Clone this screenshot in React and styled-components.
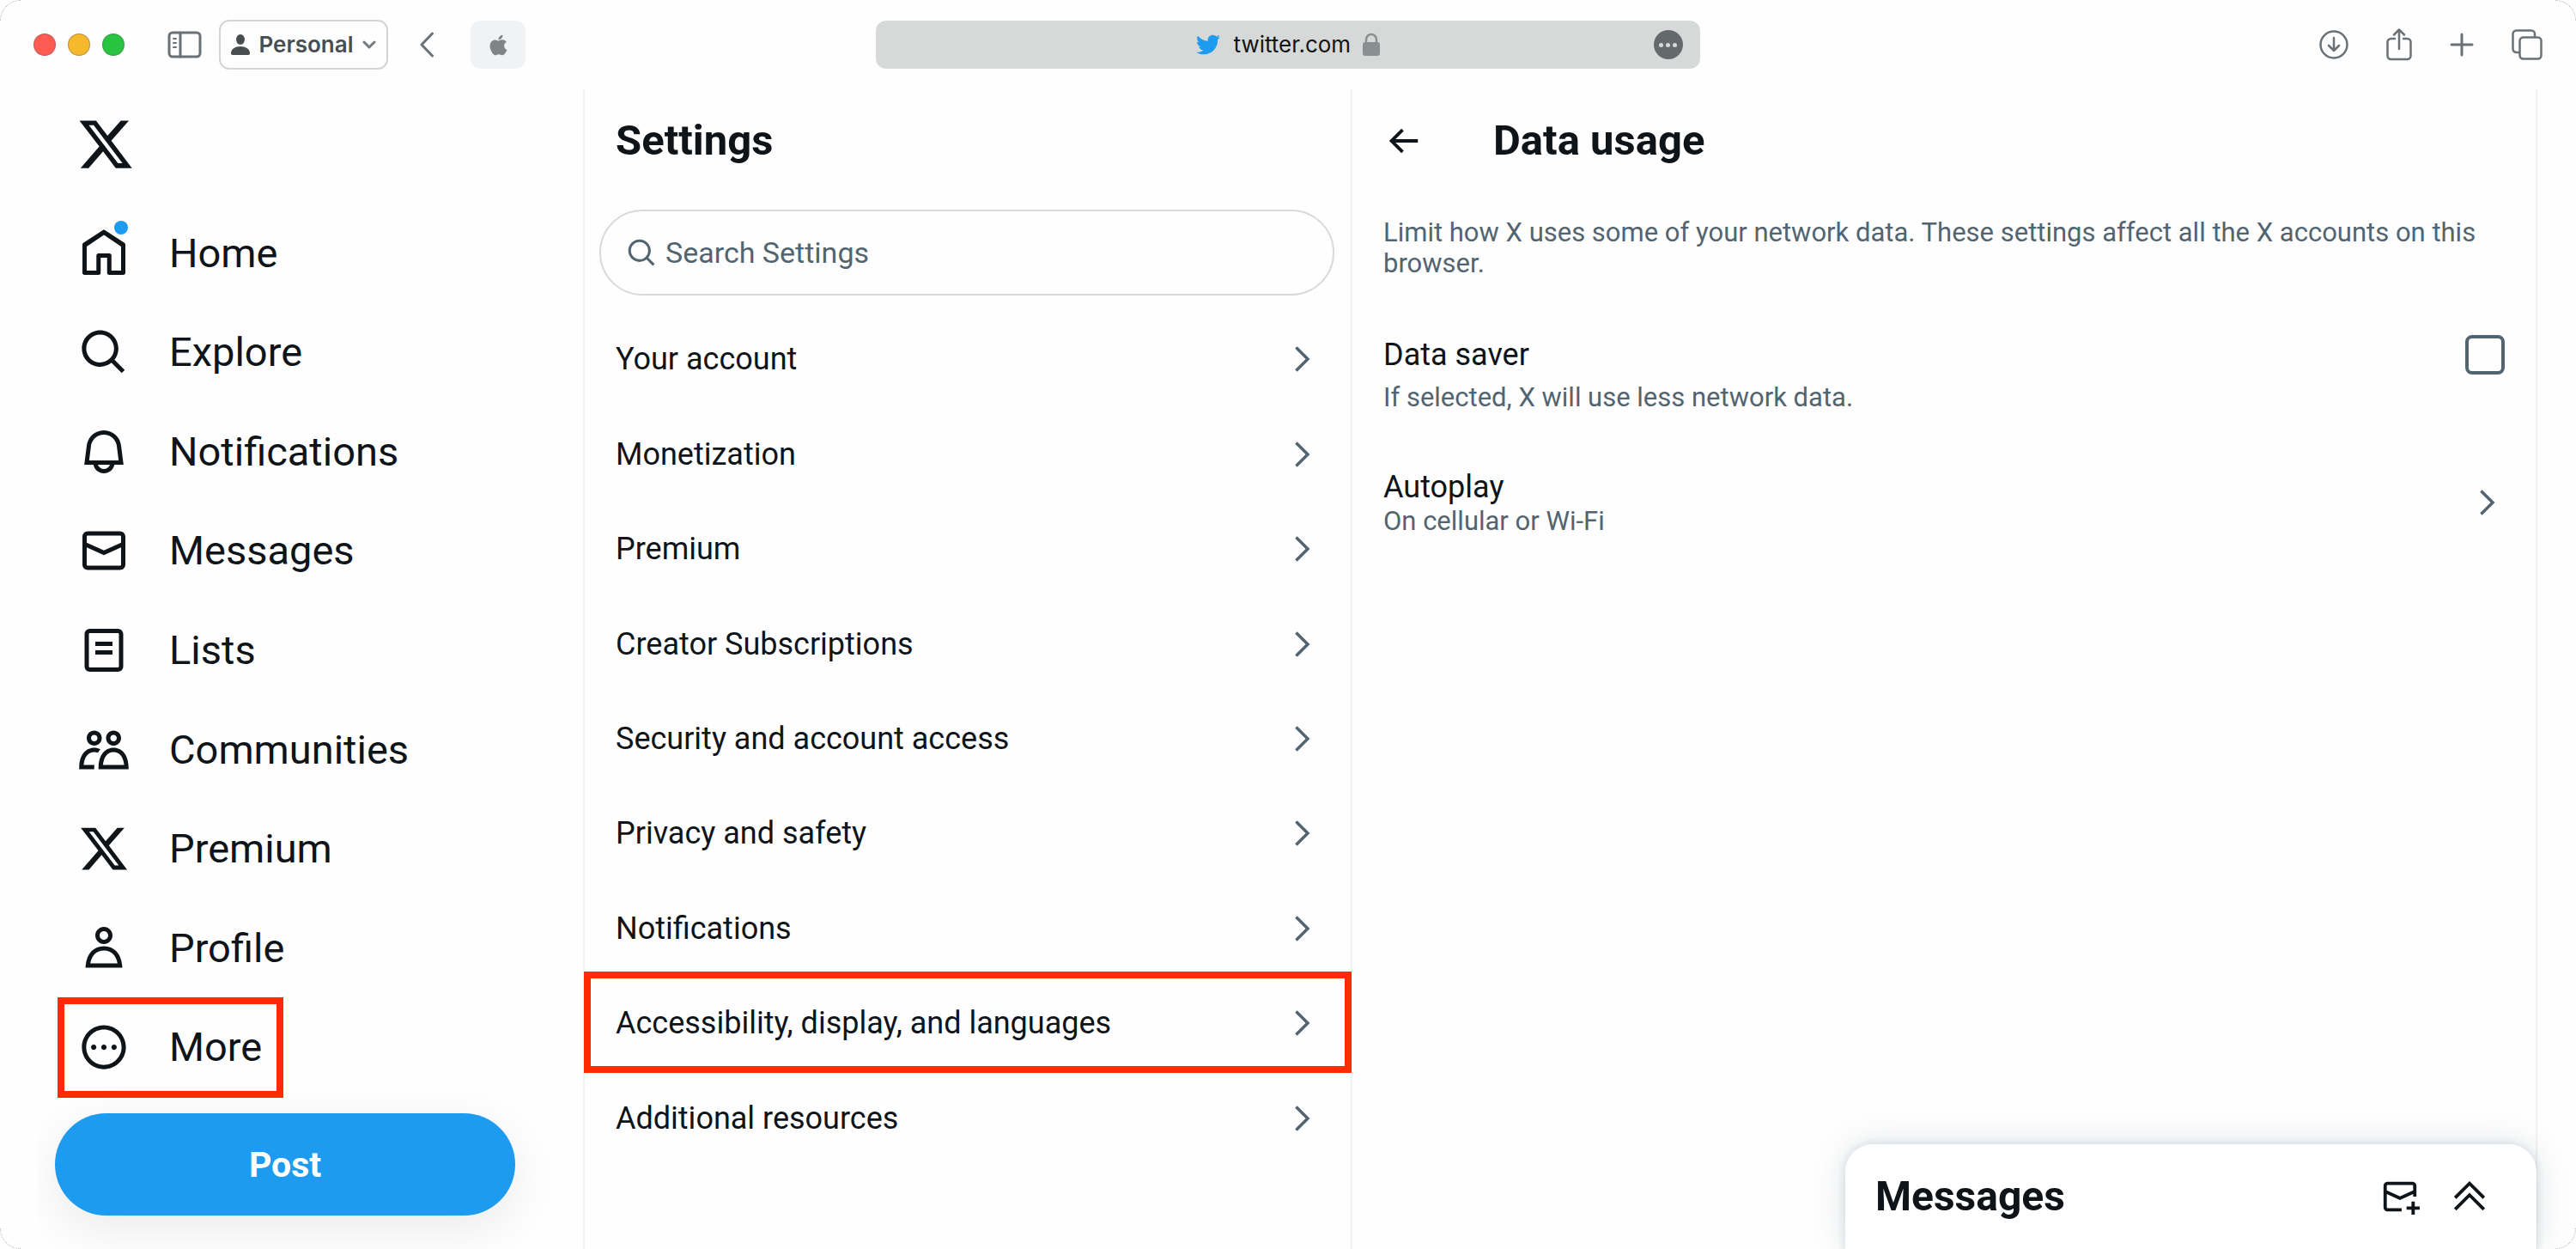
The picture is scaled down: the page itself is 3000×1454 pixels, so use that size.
import React from "react";
import styled, { createGlobalStyle, css } from "styled-components";
import { FaApple, FaTwitter } from "react-icons/fa";

const ink = "#0f1419";
const muted = "#536471";
const line = "#f0f1f2";
const chrome = "#6b7175";
const accent = "#1d9bf0";
const paper = "#fefefe";
const mark = "#ff2b00";

const GlobalStyle = createGlobalStyle`
  *, *::before, *::after { box-sizing: border-box; }
  body {
    margin: 0;
    background: ${paper};
    color: ${ink};
    font-family: Roboto, "Liberation Sans", sans-serif;
  }
  button, input { font: inherit; color: inherit; }
  h1, h2, p, ul { margin: 0; padding: 0; }
  ul { list-style: none; }
  svg { display: block; flex: none; }
`;

/* ---------- icons ---------- */

const paths = {
  x: "M18.244 2.25h3.308l-7.227 8.26 8.502 11.24H16.17l-5.214-6.817L4.99 21.75H1.68l7.73-8.835L1.254 2.25H8.08l4.713 6.231zm-1.161 17.52h1.833L7.084 4.126H5.117z",
  home: "M21.591 7.146L12.52 1.157c-.316-.21-.724-.21-1.04 0l-9.071 5.99c-.26.173-.409.456-.409.757v13.183c0 .502.418.913.929.913h6.638c.511 0 .929-.41.929-.913v-7.075h3.008v7.075c0 .502.418.913.929.913h6.639c.51 0 .928-.41.928-.913V7.904c0-.301-.158-.584-.408-.758zM20 20l-4.5.01.011-7.097c0-.502-.418-.913-.928-.913H9.44c-.511 0-.929.41-.929.913L8.5 20H4V8.773l8.011-5.342L20 8.764z",
  search:
    "M10.25 3.75c-3.59 0-6.5 2.91-6.5 6.5s2.91 6.5 6.5 6.5c1.795 0 3.419-.726 4.596-1.904 1.178-1.177 1.904-2.801 1.904-4.596 0-3.59-2.91-6.5-6.5-6.5zm-8.5 6.5c0-4.694 3.806-8.5 8.5-8.5s8.5 3.806 8.5 8.5c0 1.986-.682 3.815-1.824 5.262l4.781 4.781-1.414 1.414-4.781-4.781c-1.447 1.142-3.276 1.824-5.262 1.824-4.694 0-8.5-3.806-8.5-8.5z",
  bell: "M19.993 9.042C19.48 5.017 16.054 2 11.996 2s-7.49 3.021-7.999 7.051L2.866 18H7.1c.463 2.282 2.481 4 4.9 4s4.437-1.718 4.9-4h4.236l-1.143-8.958zM12 20c-1.306 0-2.417-.835-2.829-2h5.658c-.412 1.165-1.523 2-2.829 2zm-6.866-4l.847-6.698C6.364 6.272 8.941 4 11.996 4s5.627 2.268 6.013 5.295L18.864 16H5.134z",
  mail: "M1.998 5.5c0-1.381 1.119-2.5 2.5-2.5h15c1.381 0 2.5 1.119 2.5 2.5v13c0 1.381-1.119 2.5-2.5 2.5h-15c-1.381 0-2.5-1.119-2.5-2.5v-13zm2.5-.5c-.276 0-.5.224-.5.5v2.764l8 3.638 8-3.636V5.5c0-.276-.224-.5-.5-.5h-15zm15.5 5.463l-8 3.636-8-3.638V18.5c0 .276.224.5.5.5h15c.276 0 .5-.224.5-.5v-8.037z",
  list: "M3 4.5C3 3.12 4.12 2 5.5 2h13C19.88 2 21 3.12 21 4.5v15c0 1.38-1.12 2.5-2.5 2.5h-13C4.12 22 3 20.88 3 19.5v-15zM5.5 4c-.28 0-.5.22-.5.5v15c0 .28.22.5.5.5h13c.28 0 .5-.22.5-.5v-15c0-.28-.22-.5-.5-.5h-13zM16 10H8V8h8v2zm-8 2h8v2H8v-2z",
  people:
    "M7.501 19.917L7.471 21H.472l.029-1.027c.184-6.618 3.736-8.977 7-8.977.963 0 1.95.212 2.87.672-.444.478-.851 1.03-1.212 1.656-.507-.204-1.054-.329-1.658-.329-2.767 0-4.57 2.223-4.938 6.004H7.56c-.023.302-.05.599-.059.918zm15.998.056L23.528 21H9.472l.029-1.027c.184-6.618 3.736-8.977 7-8.977s6.816 2.358 7 8.977zM21.437 19c-.367-3.781-2.17-6.004-4.938-6.004s-4.57 2.223-4.938 6.004h9.875zm-4.938-9c-.799 0-1.527-.279-2.116-.73-.836-.64-1.384-1.638-1.384-2.77 0-1.93 1.567-3.5 3.5-3.5s3.5 1.57 3.5 3.5c0 1.132-.548 2.13-1.384 2.77-.589.451-1.317.73-2.116.73zm-1.5-3.5c0 .827.673 1.5 1.5 1.5s1.5-.673 1.5-1.5-.673-1.5-1.5-1.5-1.5.673-1.5 1.5zM7.5 3C9.433 3 11 4.57 11 6.5S9.433 10 7.5 10 4 8.43 4 6.5 5.567 3 7.5 3zm0 2C6.673 5 6 5.673 6 6.5S6.673 8 7.5 8 9 7.327 9 6.5 8.327 5 7.5 5z",
  person:
    "M5.651 19h12.698c-.337-1.8-1.023-3.21-1.945-4.19C15.318 13.65 13.838 13 12 13s-3.317.65-4.404 1.81c-.922.98-1.608 2.39-1.945 4.19zm.486-5.56C7.627 11.85 9.648 11 12 11s4.373.85 5.863 2.44c1.477 1.58 2.366 3.8 2.632 6.46l.11 1.1H3.395l.11-1.1c.266-2.66 1.155-4.88 2.632-6.46zM12 4c-1.105 0-2 .9-2 2s.895 2 2 2 2-.9 2-2-.895-2-2-2zM8 6c0-2.21 1.791-4 4-4s4 1.79 4 4-1.791 4-4 4-4-1.79-4-4z",
  more: "M3.75 12c0-4.56 3.69-8.25 8.25-8.25s8.25 3.69 8.25 8.25-3.69 8.25-8.25 8.25S3.75 16.56 3.75 12zM12 1.75C6.34 1.75 1.75 6.34 1.75 12S6.34 22.25 12 22.25 22.25 17.66 22.25 12 17.66 1.75 12 1.75zm-4.75 11.5c.69 0 1.25-.56 1.25-1.25s-.56-1.25-1.25-1.25S6 11.31 6 12s.56 1.25 1.25 1.25zm9.5 0c.69 0 1.25-.56 1.25-1.25s-.56-1.25-1.25-1.25-1.25.56-1.25 1.25.56 1.25 1.25 1.25zM13.25 12c0 .69-.56 1.25-1.25 1.25s-1.25-.56-1.25-1.25.56-1.25 1.25-1.25 1.25.56 1.25 1.25z",
  chevron:
    "M14.586 12L7.543 4.96l1.414-1.42L17.414 12l-8.457 8.46-1.414-1.42L14.586 12z",
  back: "M7.414 13l5.043 5.04-1.414 1.42L3.586 12l7.457-7.46 1.414 1.42L7.414 11H21v2H7.414z",
  compose:
    "M1.998 5.5c0-1.381 1.119-2.5 2.5-2.5h15c1.381 0 2.5 1.119 2.5 2.5V12h-2v-1.537l-8 3.636-8-3.638V18.5c0 .276.224.5.5.5H13v2H4.498c-1.381 0-2.5-1.119-2.5-2.5v-13zm2.5-.5c-.276 0-.5.224-.5.5v2.764l8 3.638 8-3.636V5.5c0-.276-.224-.5-.5-.5h-15zM19 18v-3h2v3h3v2h-3v3h-2v-3h-3v-2h3z",
  expand:
    "M12 2.59l9.46 9.45-1.42 1.42L12 5.41l-8.04 8.05-1.42-1.42L12 2.59zm0 7l9.46 9.45-1.42 1.42L12 12.41l-8.04 8.05-1.42-1.42L12 9.59z",
};

const Glyph = ({ name, size }) => (
  <svg viewBox="0 0 24 24" width={size} height={size} fill="currentColor" aria-hidden="true">
    <path d={paths[name]} />
  </svg>
);

const LineArt = ({ w, h, weight = 3, children }) => (
  <svg
    viewBox={`0 0 ${w} ${h}`}
    width={w}
    height={h}
    fill="none"
    stroke="currentColor"
    strokeWidth={weight}
    strokeLinecap="round"
    strokeLinejoin="round"
    aria-hidden="true"
  >
    {children}
  </svg>
);

/* ---------- window chrome ---------- */

const Shell = styled.div`
  display: flex;
  flex-direction: column;
  min-height: 100vh;
`;

const Corner = styled.span`
  position: fixed;
  z-index: 3;
  width: 24px;
  height: 24px;
  pointer-events: none;
  ${({ $v, $h }) => css`
    ${$v}: 0;
    ${$h}: 0;
    border-${$v}: 1px dotted #b4b4b4;
    border-${$h}: 1px dotted #b4b4b4;
    border-${$v}-${$h}-radius: 24px;
  `}
`;

const Toolbar = styled.header`
  display: grid;
  grid-template-columns: 1fr minmax(0, 960px) 1fr;
  align-items: center;
  height: 104px;
  padding: 0 39px 0 38px;
  color: ${chrome};
  font-family: Inter, "Liberation Sans", sans-serif;
`;

const ToolGroup = styled.div`
  display: flex;
  align-items: center;
  gap: ${({ $gap }) => $gap}px;
  justify-content: ${({ $end }) => ($end ? "flex-end" : "flex-start")};
`;

const PlainButton = styled.button`
  display: flex;
  align-items: center;
  justify-content: center;
  padding: 0;
  border: 0;
  background: none;
  cursor: pointer;
`;

const Light = styled(PlainButton)`
  width: 26px;
  height: 26px;
  border: 1px solid rgba(90, 90, 90, 0.4);
  border-radius: 50%;
  background: ${({ $color }) => $color};
`;

const Lights = styled.div`
  display: flex;
  gap: 14px;
  padding-left: 1px;
  margin-right: 50px;
`;

const ProfileButton = styled(PlainButton)`
  width: 197px;
  height: 58px;
  margin: 0 36px 0 20px;
  border: 2px solid #d3d4d5;
  border-radius: 12px;
  color: #484d50;
  font-size: 26px;
  font-weight: 600;
  line-height: 32px;
  gap: 10px;
`;

const PinnedTab = styled(PlainButton)`
  width: 64px;
  height: 56px;
  margin-left: 42px;
  border-radius: 12px;
  background: #f1f2f4;
  color: #7f8487;
`;

const AddressBar = styled.div`
  display: grid;
  grid-template-columns: 1fr auto 1fr;
  align-items: center;
  height: 56px;
  padding: 0 20px;
  border-radius: 12px;
  background: #d7d9d8;
`;

const Address = styled.label`
  grid-column: 2;
  display: flex;
  align-items: center;
  color: #8a8f91;
`;

const Bird = styled(FaTwitter)`
  margin-right: 16px;
  color: ${accent};
`;

const AddressInput = styled.input`
  width: 150px;
  padding: 0;
  border: 0;
  outline: 0;
  background: none;
  color: #111416;
  font-size: 26px;
  line-height: 32px;
`;

const PageMenu = styled(PlainButton)`
  justify-self: end;
  gap: 3px;
  width: 34px;
  height: 34px;
  border-radius: 50%;
  background: #64696b;
  &::before, &::after, & > span {
    content: "";
    width: 5px;
    height: 5px;
    border-radius: 50%;
    background: #d7d9d8;
  }
`;

/* ---------- page columns ---------- */

const Columns = styled.div`
  flex: 1;
  display: grid;
  grid-template-columns: 679px minmax(0, 894fr) minmax(0, 1382fr);
  padding-right: 45px;
`;

const Sidebar = styled.div`
  margin-left: 44px;
  padding: 0 79px 0 20px;
  overflow-x: clip;
`;

const Logo = styled.a`
  display: block;
  width: fit-content;
  padding: 30px 0 35px;
  margin-left: 25px;
  color: inherit;
`;

const NavList = styled.ul`
  display: grid;
  grid-template-rows: repeat(9, 1fr);
  height: 1040px;
`;

const Highlight = css`
  &::after {
    content: "";
    position: absolute;
    inset: ${({ $inset }) => $inset};
    border: 8px solid ${mark};
    pointer-events: none;
  }
`;

const NavLink = styled.a`
  position: relative;
  display: flex;
  align-items: center;
  gap: 46px;
  width: fit-content;
  height: 100%;
  padding: 0 25px 0 27px;
  color: inherit;
  font-size: 47px;
  line-height: 60px;
  text-decoration: none;
  ${({ $inset }) => $inset && Highlight}
`;

const NavIcon = styled.span`
  position: relative;
`;

const UnreadDot = styled.span`
  position: absolute;
  top: -8px;
  right: 2px;
  width: 16px;
  height: 16px;
  border-radius: 50%;
  background: ${accent};
`;

const PostButton = styled(PlainButton)`
  width: 100%;
  height: 119px;
  margin-top: 19px;
  border-radius: 60px;
  background: ${accent};
  box-shadow: 0 16px 56px rgba(0, 0, 0, 0.08);
  color: #fff;
  font-size: 41px;
  font-weight: 700;
  line-height: 48px;
`;

const SettingsColumn = styled.section`
  border-left: 2px solid ${line};
`;

const DetailColumn = styled.main`
  border: solid ${line};
  border-width: 0 2px;
`;

const ColumnHeader = styled.header`
  display: flex;
  align-items: center;
  gap: 82px;
  height: 120px;
  padding: 0 36px;
`;

const Title = styled.h2`
  font-size: 49px;
  font-weight: 700;
  line-height: 60px;
`;

const SearchBox = styled.label`
  display: flex;
  align-items: center;
  gap: 9px;
  height: 100px;
  margin: 20px 19px 19px 17px;
  padding: 0 29px;
  border: 2px solid #d8d9da;
  border-radius: 50px;
  color: ${muted};
`;

const SearchInput = styled.input`
  flex: 1;
  min-width: 0;
  padding: 0;
  border: 0;
  outline: 0;
  background: none;
  font-size: 34px;
  line-height: 42px;
  &::placeholder { color: ${muted}; opacity: 1; }
`;

const SettingsList = styled.ul`
  display: grid;
  grid-template-rows: repeat(9, 1fr);
  height: 994px;
`;

const SettingsLink = styled.a`
  position: relative;
  display: flex;
  align-items: center;
  justify-content: space-between;
  height: 100%;
  padding: 0 36px;
  color: inherit;
  font-size: 36px;
  line-height: 42px;
  text-decoration: none;
  ${({ $inset }) => $inset && Highlight}
`;

const ChevronWrap = styled.span`
  color: ${muted};
`;

const Note = styled.p`
  color: ${muted};
  font-size: 31px;
  line-height: 36px;
`;

const Intro = styled(Note)`
  padding: 29px 36px 0;
`;

const Option = styled.div`
  padding: 65px 36px 0;
`;

const OptionLabel = styled.label`
  display: flex;
  align-items: center;
  justify-content: space-between;
  margin-bottom: 9px;
  font-size: 36px;
  line-height: 46px;
`;

const CheckBox = styled.input`
  appearance: none;
  width: 46px;
  height: 46px;
  margin: 0;
  border: 4px solid ${muted};
  border-radius: 8px;
  &:checked { background: ${accent}; border-color: ${accent}; }
`;

const OptionLink = styled.a`
  display: flex;
  align-items: center;
  justify-content: space-between;
  padding: 64px 36px 0;
  color: inherit;
  font-size: 36px;
  line-height: 44px;
  text-decoration: none;
`;

const Dock = styled.aside`
  position: fixed;
  right: 46px;
  bottom: 0;
  display: flex;
  align-items: center;
  gap: 35px;
  width: 805px;
  height: 122px;
  padding: 0 55px 0 35px;
  border-radius: 32px 32px 0 0;
  background: #fff;
  box-shadow: 0 0 38px rgba(101, 119, 134, 0.2), 0 0 8px 2px rgba(101, 119, 134, 0.15);
`;

const DockTitle = styled(Title)`
  flex: 1;
  font-size: 48px;
`;

/* ---------- content ---------- */

const nav = [
  { icon: "home", label: "Home", unread: true },
  { icon: "search", label: "Explore" },
  { icon: "bell", label: "Notifications" },
  { icon: "mail", label: "Messages" },
  { icon: "list", label: "Lists" },
  { icon: "people", label: "Communities" },
  { icon: "x", label: "Premium" },
  { icon: "person", label: "Profile" },
  { icon: "more", label: "More", inset: "0 0 -1px 3px" },
];

const settings = [
  { label: "Your account" },
  { label: "Monetization" },
  { label: "Premium" },
  { label: "Creator Subscriptions" },
  { label: "Security and account access" },
  { label: "Privacy and safety" },
  { label: "Notifications" },
  { label: "Accessibility, display, and languages", inset: "-5px -1px -2px" },
  { label: "Additional resources" },
];

const Chevron = () => (
  <ChevronWrap>
    <Glyph name="chevron" size={42} />
  </ChevronWrap>
);

function BrowserBar() {
  return (
    <Toolbar>
      <ToolGroup $gap={0}>
        <Lights>
          <Light $color="#fe5b52" aria-label="Close window" />
          <Light $color="#f8b82c" aria-label="Minimize window" />
          <Light $color="#28c43f" aria-label="Zoom window" />
        </Lights>
        <PlainButton aria-label="Show sidebar">
          <LineArt w={40} h={32}>
            <rect x="2" y="2" width="36" height="28" rx="4" />
            <path d="M15 2v28" />
            <path d="M7 9h3M7 14h3M7 19h3" strokeWidth="2" />
          </LineArt>
        </PlainButton>
        <ProfileButton aria-haspopup="menu">
          <svg width="22" height="24" viewBox="0 0 22 24" fill="currentColor" aria-hidden="true">
            <ellipse cx="11" cy="6" rx="5" ry="6" />
            <path d="M0 22c0-5 5-8 11-8s11 3 11 8c0 1-.5 2-2 2H2c-1.500 0-2-1-2-2z" />
          </svg>
          Personal
          <LineArt w={16} h={10}>
            <path d="M2 2l6 6 6-6" opacity=".75" />
          </LineArt>
        </ProfileButton>
        <PlainButton aria-label="Go back">
          <LineArt w={18} h={30}>
            <path d="M15.500 2L3 15l12.500 13" />
          </LineArt>
        </PlainButton>
        <PinnedTab aria-label="Apple">
          <FaApple size={27} aria-hidden="true" />
        </PinnedTab>
      </ToolGroup>

      <AddressBar>
        <Address>
          <Bird size={28} aria-hidden="true" />
          <AddressInput type="text" aria-label="Address" defaultValue="twitter.com" />
          <svg width="20" height="28" viewBox="0 0 20 28" fill="currentColor" aria-hidden="true">
            <rect y="11" width="20" height="16" rx="3" />
            <path d="M4 12V8a6 6 0 0 1 12 0v4" fill="none" stroke="currentColor" strokeWidth="2.500" />
          </svg>
        </Address>
        <PageMenu aria-label="Page menu">
          <span />
        </PageMenu>
      </AddressBar>

      <ToolGroup $gap={44} $end>
        <PlainButton aria-label="Downloads">
          <LineArt w={34} h={34} weight={2.5}>
            <circle cx="17" cy="17" r="15.500" />
            <path d="M17 9v15M11 18l6 6 6-6" />
          </LineArt>
        </PlainButton>
        <PlainButton aria-label="Share">
          <LineArt w={30} h={38} weight={2.5}>
            <path d="M10 12H5.500a4 4 0 0 0-4 4v16a4 4 0 0 0 4 4h19a4 4 0 0 0 4-4V16a4 4 0 0 0-4-4H20M15 24V2M9 7.500L15 1.500l6 6" />
          </LineArt>
        </PlainButton>
        <PlainButton aria-label="New tab">
          <LineArt w={28} h={28}>
            <path d="M14 2v24M2 14h24" />
          </LineArt>
        </PlainButton>
        <PlainButton aria-label="Tab overview">
          <LineArt w={36} h={36} weight={2.5}>
            <rect x="9.500" y="9.500" width="25" height="25" rx="4" />
            <path d="M9 27H5.500a4 4 0 0 1-4-4V5.500a4 4 0 0 1 4-4H23a4 4 0 0 1 4 4V9" />
          </LineArt>
        </PlainButton>
      </ToolGroup>
    </Toolbar>
  );
}

export default function App() {
  return (
    <Shell>
      <GlobalStyle />
      <Corner $v="top" $h="left" />
      <Corner $v="top" $h="right" />
      <Corner $v="bottom" $h="left" />
      <Corner $v="bottom" $h="right" />
      <BrowserBar />

      <Columns>
        <Sidebar>
          <Logo href="#x" aria-label="X">
            <Glyph name="x" size={68} />
          </Logo>
          <nav aria-label="Primary">
            <NavList>
              {nav.map(({ icon, label, unread, inset }) => (
                <li key={label}>
                  <NavLink href={`#${label}`} $inset={inset}>
                    <NavIcon>
                      <Glyph name={icon} size={60} />
                      {unread && <UnreadDot />}
                    </NavIcon>
                    {label}
                  </NavLink>
                </li>
              ))}
            </NavList>
          </nav>
          <PostButton>Post</PostButton>
        </Sidebar>

        <SettingsColumn>
          <ColumnHeader>
            <Title>Settings</Title>
          </ColumnHeader>
          <SearchBox>
            <Glyph name="search" size={37} />
            <SearchInput type="text" placeholder="Search Settings" aria-label="Search Settings" />
          </SearchBox>
          <SettingsList>
            {settings.map(({ label, inset }) => (
              <li key={label}>
                <SettingsLink href="#settings" $inset={inset}>
                  {label}
                  <Chevron />
                </SettingsLink>
              </li>
            ))}
          </SettingsList>
        </SettingsColumn>

        <DetailColumn>
          <ColumnHeader>
            <PlainButton aria-label="Back">
              <Glyph name="back" size={46} />
            </PlainButton>
            <Title>Data usage</Title>
          </ColumnHeader>
          <Intro>
            Limit how X uses some of your network data. These settings affect all the X accounts on
            this browser.
          </Intro>
          <Option>
            <OptionLabel>
              Data saver
              <CheckBox type="checkbox" aria-describedby="saver-note" />
            </OptionLabel>
            <Note id="saver-note">If selected, X will use less network data.</Note>
          </Option>
          <OptionLink href="#autoplay">
            <div>
              Autoplay
              <Note>On cellular or Wi-Fi</Note>
            </div>
            <Chevron />
          </OptionLink>
        </DetailColumn>
      </Columns>

      <Dock aria-label="Messages">
        <DockTitle>Messages</DockTitle>
        <PlainButton aria-label="New message">
          <Glyph name="compose" size={46} />
        </PlainButton>
        <PlainButton aria-label="Expand">
          <Glyph name="expand" size={46} />
        </PlainButton>
      </Dock>
    </Shell>
  );
}
